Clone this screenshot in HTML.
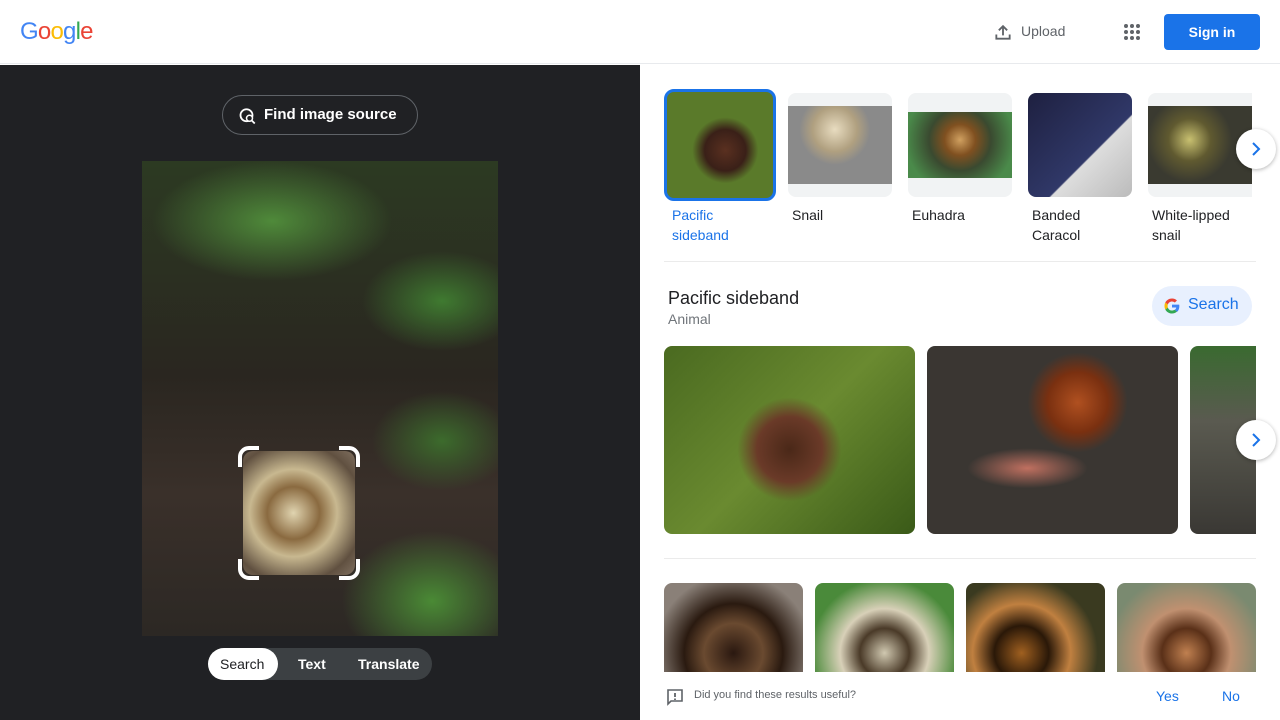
<!DOCTYPE html>
<html><head><meta charset="utf-8"><style>
*{box-sizing:border-box;margin:0;padding:0}
body{width:1280px;height:720px;overflow:hidden;font-family:"Liberation Sans",Arial,sans-serif;background:#fff;position:relative}
.hdr{position:absolute;left:0;top:0;width:1280px;height:64px;background:#fff;border-bottom:1px solid #e8eaed}
.logo{position:absolute;left:20px;top:18px;font-size:24px;letter-spacing:-0.8px}
.left{position:absolute;left:0;top:65px;width:640px;height:655px;background:#202124}
.fis{position:absolute;left:222px;top:95px;width:196px;height:40px;border:1px solid #5f6368;border-radius:20px;color:#fff;font-weight:bold;font-size:15px;line-height:38px;padding-left:41px}
.photo{position:absolute;left:142px;top:161px;width:356px;height:475px;overflow:hidden;
background:radial-gradient(ellipse 120px 60px at 130px 60px,#4f8a3a,transparent),radial-gradient(ellipse 80px 50px at 300px 140px,#3f7a30,transparent),radial-gradient(ellipse 90px 70px at 290px 440px,#4a8a35,transparent),radial-gradient(ellipse 70px 50px at 300px 280px,#3c6b2c,transparent),linear-gradient(180deg,#2c3a22 0%,#2a2620 45%,#3a302a 70%,#2c2824 100%)}
.crop{position:absolute;left:243px;top:451px;width:112px;height:124px;border-radius:10px;background:radial-gradient(circle at 45% 50%,#e0d4b0 0%,#8a6a40 30%,#c8b890 50%,#605040 80%,#807060 100%)}
.tabs{position:absolute;left:208px;top:648px;width:224px;height:32px;background:#3c4043;border-radius:16px;color:#fff;font-size:14px;font-weight:bold}
.tabs span{position:absolute;top:8px}
.thumb{position:absolute;top:93px;width:104px;height:104px;border-radius:8px;overflow:hidden;background:#f1f3f4}
.lbl{position:absolute;top:205px;font-size:14px;line-height:20px;color:#202124}
.sep{position:absolute;left:664px;width:592px;height:1px;background:#ebebeb}
.big{position:absolute;top:346px;width:251px;height:188px;border-radius:8px}
.sm{position:absolute;top:583px;width:139px;height:100px;border-radius:8px}
.arrow{position:absolute;width:40px;height:40px;border-radius:50%;background:#fff;box-shadow:0 1px 4px rgba(0,0,0,.3)}
.foot{position:absolute;left:640px;top:672px;width:640px;height:48px;background:#fff;font-size:11px;color:#5f6368}
</style></head><body>
<div class="hdr">
<div class="logo"><span style="color:#4285f4">G</span><span style="color:#ea4335">o</span><span style="color:#fbbc05">o</span><span style="color:#4285f4">g</span><span style="color:#34a853">l</span><span style="color:#ea4335">e</span></div>
<svg style="position:absolute;left:993px;top:22px" width="20" height="20" viewBox="0 0 24 24"><path d="M12 16V5M7 10l5-5 5 5M4 15v5h16v-5" fill="none" stroke="#5f6368" stroke-width="2.2"/></svg>
<div style="position:absolute;left:1021px;top:23px;font-size:14px;color:#5f6368">Upload</div>
<svg style="position:absolute;left:1123px;top:23px" width="18" height="18" viewBox="0 0 18 18" fill="#5f6368"><circle cx="3" cy="3" r="2"/><circle cx="9" cy="3" r="2"/><circle cx="15" cy="3" r="2"/><circle cx="3" cy="9" r="2"/><circle cx="9" cy="9" r="2"/><circle cx="15" cy="9" r="2"/><circle cx="3" cy="15" r="2"/><circle cx="9" cy="15" r="2"/><circle cx="15" cy="15" r="2"/></svg>
<div style="position:absolute;left:1164px;top:14px;width:96px;height:36px;background:#1a73e8;border-radius:4px;color:#fff;font-weight:bold;font-size:14px;text-align:center;line-height:36px">Sign in</div>
</div>
<div class="left"></div>
<div class="fis"><svg style="position:absolute;left:16px;top:11px" width="18" height="18" viewBox="0 0 24 24"><circle cx="10" cy="11" r="8" fill="none" stroke="#fff" stroke-width="2.4"/><circle cx="14" cy="15" r="4" fill="#202124" stroke="#fff" stroke-width="2"/><path d="M17 18l4 4" stroke="#fff" stroke-width="2.4"/></svg>Find image source</div>
<div class="photo"></div>
<div class="crop"></div>
<svg style="position:absolute;left:237px;top:445px" width="124" height="136" viewBox="0 0 124 136" fill="none" stroke="#fff" stroke-width="4"><path d="M3 22V12a9 9 0 0 1 9-9h10M102 3h10a9 9 0 0 1 9 9v10M121 114v10a9 9 0 0 1-9 9h-10M22 133H12a9 9 0 0 1-9-9v-10"/></svg>
<div class="tabs"><div style="position:absolute;left:0;top:0;width:70px;height:32px;background:#fff;border-radius:16px"></div><span style="left:12px;color:#202124;font-weight:normal">Search</span><span style="left:90px">Text</span><span style="left:150px">Translate</span></div>

<div class="thumb" style="left:664px;top:89px;width:112px;height:112px;border:3px solid #1a73e8;border-radius:10px;background:radial-gradient(circle at 55% 55%,#5a3020 0%,#3a2018 25%,transparent 40%),#5a7a2a"></div>
<div class="thumb" style="left:788px;background:linear-gradient(#f1f3f4 13px,transparent 13px,transparent 91px,#f1f3f4 91px),radial-gradient(circle at 45% 35%,#e8dcc0,#b0a080 25%,#8a8a8a 40%)"></div>
<div class="thumb" style="left:908px;background:linear-gradient(#f1f3f4 19px,transparent 19px,transparent 85px,#f1f3f4 85px),radial-gradient(circle at 50% 45%,#d0a060,#805020 20%,#3a4a30 40%,#4a8a4a 70%)"></div>
<div class="thumb" style="left:1028px;background:linear-gradient(135deg,#1e2040,#303868 60%,#ddd 61%,#bbb)"></div>
<div class="thumb" style="left:1148px;width:104px;border-radius:8px 0 0 8px;background:linear-gradient(#f1f3f4 13px,transparent 13px,transparent 91px,#f1f3f4 91px),radial-gradient(circle at 40% 45%,#c8c070,#605a30 25%,#3a3a30 50%)"></div>
<div class="lbl" style="left:672px;color:#1a73e8">Pacific<br>sideband</div>
<div class="lbl" style="left:792px">Snail</div>
<div class="lbl" style="left:912px">Euhadra</div>
<div class="lbl" style="left:1032px">Banded<br>Caracol</div>
<div class="lbl" style="left:1152px">White-lipped<br>snail</div>
<div class="arrow" style="left:1236px;top:129px"><svg style="position:absolute;left:12px;top:12px" width="16" height="16" viewBox="0 0 16 16"><path d="M5 2l6 6-6 6" fill="none" stroke="#1a73e8" stroke-width="2"/></svg></div>
<div class="sep" style="top:261px"></div>
<div style="position:absolute;left:668px;top:288px;font-size:18px;color:#202124">Pacific sideband</div>
<div style="position:absolute;left:668px;top:311px;font-size:14px;color:#70757a">Animal</div>
<div style="position:absolute;left:1152px;top:286px;width:100px;height:40px;border-radius:20px;background:#e8f0fe"></div>
<div style="position:absolute;left:1188px;top:296px;font-size:16px;color:#1a73e8">Search</div>
<svg style="position:absolute;left:1163px;top:297px" width="18" height="18" viewBox="0 0 48 48"><path fill="#4285F4" d="M43.6 24.5c0-1.6-.1-2.8-.4-4.1H24v7.5h11.3c-.2 1.9-1.5 4.7-4.3 6.6l6.6 5.1c4-3.7 6-9.1 6-15.1z"/><path fill="#34A853" d="M24 44c5.4 0 10-1.8 13.3-4.9l-6.6-5.1c-1.7 1.2-4.1 2.1-6.7 2.1-5.2 0-9.6-3.4-11.1-8.2l-6.8 5.3C9.4 39.6 16.2 44 24 44z"/><path fill="#FBBC05" d="M12.9 27.9c-.4-1.2-.6-2.5-.6-3.9s.2-2.7.6-3.9l-6.8-5.3C4.7 17.6 4 20.7 4 24s.7 6.4 2.1 9.2l6.8-5.3z"/><path fill="#EA4335" d="M24 11.9c3.7 0 6.2 1.6 7.6 2.9l5.6-5.5C33.9 6.2 29.4 4 24 4 16.2 4 9.4 8.4 6.1 14.8l6.8 5.3c1.5-4.8 5.9-8.2 11.1-8.2z"/></svg>
<div class="big" style="left:664px;background:radial-gradient(circle at 50% 55%,#4a2818 0%,#6a3a28 20%,transparent 32%),linear-gradient(135deg,#4a6a20,#6a8a30 50%,#3a5a18)"></div>
<div class="big" style="left:927px;background:radial-gradient(circle at 60% 30%,#b05020 0%,#7a3010 15%,transparent 25%),radial-gradient(ellipse 60px 20px at 40% 65%,#c07060,transparent),#3a3632"></div>
<div class="big" style="left:1190px;width:66px;border-radius:8px 0 0 8px;background:linear-gradient(#3a6a30,#5a5a50 40%,#3a3834)"></div>
<div class="arrow" style="left:1236px;top:420px"><svg style="position:absolute;left:12px;top:12px" width="16" height="16" viewBox="0 0 16 16"><path d="M5 2l6 6-6 6" fill="none" stroke="#1a73e8" stroke-width="2"/></svg></div>
<div class="sep" style="top:558px"></div>
<div class="sm" style="left:664px;background:radial-gradient(circle at 50% 70%,#2a1810,#6a4a30 30%,#2a1a10 50%,#8a8078 80%)"></div>
<div class="sm" style="left:815px;background:radial-gradient(circle at 50% 70%,#d0c8b0,#4a3a28 25%,#d8d0b8 45%,#4a8a3a 75%)"></div>
<div class="sm" style="left:966px;background:radial-gradient(circle at 40% 70%,#a06020,#2a1808 25%,#c08040 45%,#3a3a20 70%)"></div>
<div class="sm" style="left:1117px;background:radial-gradient(circle at 50% 70%,#c08050,#5a3018 25%,#c09070 45%,#7a8a70 80%)"></div>
<div class="foot">
<svg style="position:absolute;left:26px;top:16px" width="18" height="18" viewBox="0 0 18 18"><path d="M2 2h14v11H5l-3 3z" fill="none" stroke="#5f6368" stroke-width="1.6"/><path d="M9 5v4M9 10.5v1.5" stroke="#5f6368" stroke-width="1.8"/></svg>
<div style="position:absolute;left:54px;top:17px">Did you find these results useful?</div>
<div style="position:absolute;left:516px;top:16px;font-size:14px;color:#1a73e8">Yes</div>
<div style="position:absolute;left:582px;top:16px;font-size:14px;color:#1a73e8">No</div>
</div>
</body></html>
